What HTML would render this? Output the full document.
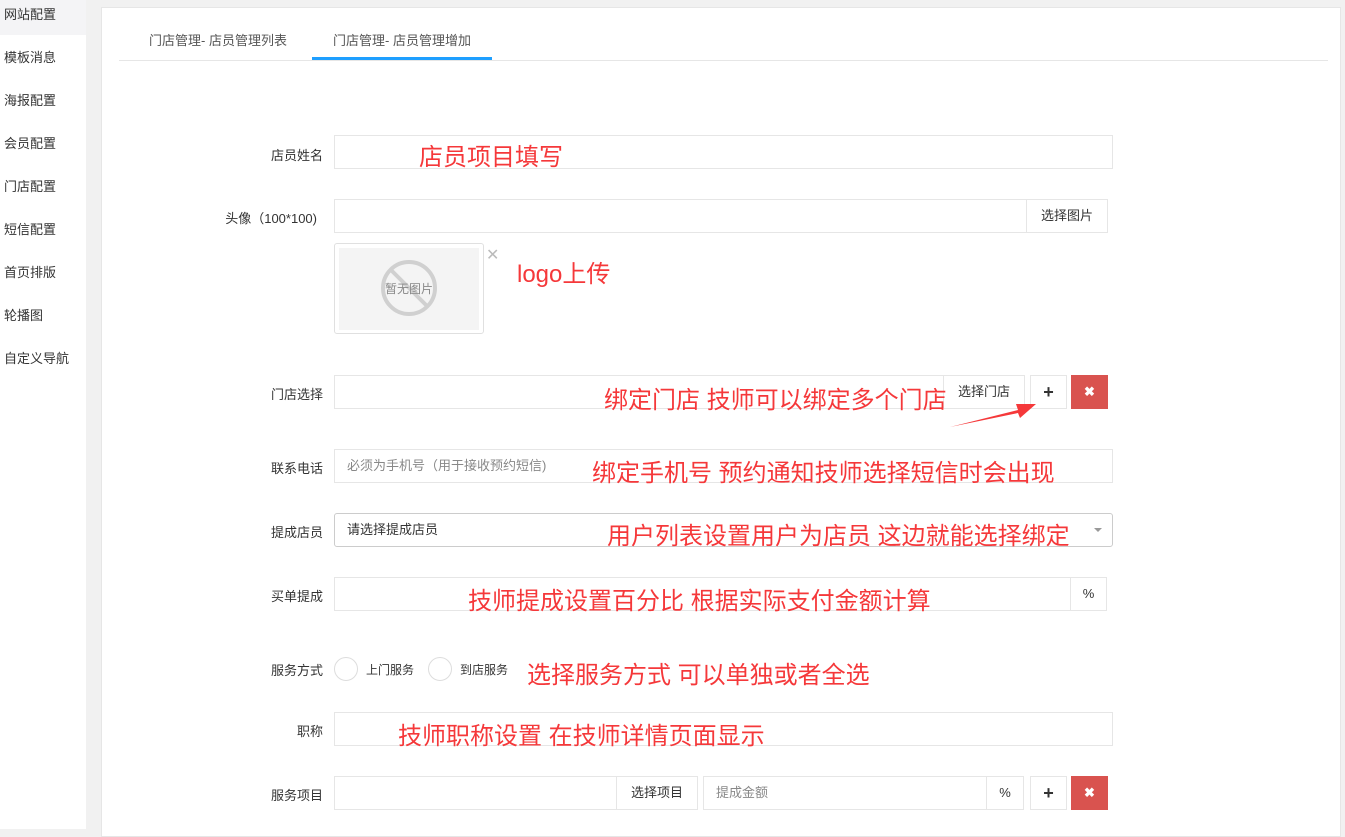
<!DOCTYPE html>
<html><head><meta charset="utf-8"><style>
*{margin:0;padding:0;box-sizing:border-box}
body{width:1345px;height:829px;overflow:hidden;background:#f1f1f1;font-family:"Liberation Sans","Noto Sans CJK SC",sans-serif;font-size:13px;color:#333;position:relative}
.side{position:absolute;left:0;top:0;width:86px;height:829px;background:#fff}
.side div{height:43px;line-height:30px;padding-left:4px;font-size:13px;color:#333}
.side div.on{background:#f4f4f6;height:35px}
.panel{position:absolute;left:101px;top:7px;width:1240px;height:830px;background:#fff;border:1px solid #e6e6e6}
.a{position:absolute}
.tab{position:absolute;top:22px;font-size:13px;color:#555}
.lbl{position:absolute;width:200px;text-align:right;font-size:13px;color:#333}
.in{position:absolute;height:34px;border:1px solid #e6e6e6;background:#fff;font-size:13px;color:#888;padding-left:12px;line-height:32px}
.btn{position:absolute;height:34px;border:1px solid #e6e6e6;background:#fff;font-size:13px;color:#333;text-align:center;line-height:32px}
.red{position:absolute;color:#f5383a;font-size:24px;white-space:nowrap;margin-top:-3px}
.x{background:#d9534f;border-color:#d9534f;color:#fff;font-weight:bold}
.radio{position:absolute;width:24px;height:24px;border:1px solid #ddd;border-radius:50%;background:#fff}
</style></head><body>
<div class="side">
<div class="on">网站配置</div><div style="height:8px"></div>
<div>模板消息</div><div>海报配置</div><div>会员配置</div><div>门店配置</div><div>短信配置</div><div>首页排版</div><div>轮播图</div><div>自定义导航</div>
</div>
<div class="panel"></div>
<div class="tab" style="left:149px;top:30px">门店管理- 店员管理列表</div>
<div class="tab" style="left:333px;top:30px">门店管理- 店员管理增加</div>
<div class="a" style="left:119px;top:60px;width:1209px;height:1px;background:#e6e6e6"></div>
<div class="a" style="left:312px;top:57px;width:180px;height:3px;background:#1e9fff"></div>

<div class="lbl" style="left:123px;top:145px">店员姓名</div>
<div class="in" style="left:334px;top:135px;width:779px"></div>
<div class="red" style="left:419px;top:140px">店员项目填写</div>

<div class="lbl" style="left:117px;top:208px">头像（100*100)</div>
<div class="in" style="left:334px;top:199px;width:693px"></div>
<div class="btn" style="left:1026px;top:199px;width:82px">选择图片</div>
<div class="a" style="left:334px;top:243px;width:150px;height:91px;border:1px solid #e0e0e0;border-radius:3px;background:#fff"></div>
<div class="a" style="left:339px;top:248px;width:140px;height:82px;background:#f4f4f4"></div>
<svg class="a" style="left:380px;top:259px" width="58" height="58"><circle cx="29" cy="29" r="26" fill="none" stroke="#d0d0d0" stroke-width="4"/><line x1="11" y1="11" x2="47" y2="47" stroke="#d0d0d0" stroke-width="4"/><text x="29" y="34" font-size="12" text-anchor="middle" fill="#888" font-family="Noto Sans CJK SC">暂无图片</text></svg>
<div class="a" style="left:486px;top:245px;color:#bbb;font-size:16px">✕</div>
<div class="red" style="left:517px;top:257px">logo上传</div>

<div class="lbl" style="left:123px;top:384px">门店选择</div>
<div class="in" style="left:334px;top:375px;width:610px"></div>
<div class="btn" style="left:943px;top:375px;width:82px">选择门店</div>
<div class="btn" style="left:1030px;top:375px;width:37px;font-weight:bold;font-size:18px">+</div>
<div class="btn x" style="left:1071px;top:375px;width:37px">✖</div>
<div class="red" style="left:604px;top:383px">绑定门店 技师可以绑定多个门店</div>
<svg class="a" style="left:948px;top:400px" width="90" height="30"><polygon points="2,27 70,10 68,4 88,4 72,18 70,13" fill="#f5383a"/></svg>

<div class="lbl" style="left:123px;top:458px">联系电话</div>
<div class="in" style="left:334px;top:449px;width:779px">必须为手机号（用于接收预约短信)</div>
<div class="red" style="left:592px;top:456px">绑定手机号 预约通知技师选择短信时会出现</div>

<div class="lbl" style="left:123px;top:522px">提成店员</div>
<div class="in" style="left:334px;top:513px;width:779px;color:#333;border-color:#ccc;border-radius:3px">请选择提成店员</div>
<div class="a" style="left:1094px;top:528px;width:0;height:0;border:4px solid transparent;border-top-color:#999"></div>
<div class="red" style="left:607px;top:519px">用户列表设置用户为店员 这边就能选择绑定</div>

<div class="lbl" style="left:123px;top:586px">买单提成</div>
<div class="in" style="left:334px;top:577px;width:737px"></div>
<div class="btn" style="left:1070px;top:577px;width:37px">%</div>
<div class="red" style="left:468px;top:584px">技师提成设置百分比 根据实际支付金额计算</div>

<div class="lbl" style="left:123px;top:660px">服务方式</div>
<div class="radio" style="left:334px;top:657px"></div>
<div class="a" style="left:366px;top:661px;font-size:12px">上门服务</div>
<div class="radio" style="left:428px;top:657px"></div>
<div class="a" style="left:460px;top:661px;font-size:12px">到店服务</div>
<div class="red" style="left:527px;top:658px">选择服务方式 可以单独或者全选</div>

<div class="lbl" style="left:123px;top:721px">职称</div>
<div class="in" style="left:334px;top:712px;width:779px"></div>
<div class="red" style="left:398px;top:719px">技师职称设置 在技师详情页面显示</div>

<div class="lbl" style="left:123px;top:785px">服务项目</div>
<div class="in" style="left:334px;top:776px;width:283px"></div>
<div class="btn" style="left:616px;top:776px;width:82px">选择项目</div>
<div class="in" style="left:703px;top:776px;width:284px">提成金额</div>
<div class="btn" style="left:986px;top:776px;width:38px">%</div>
<div class="btn" style="left:1030px;top:776px;width:37px;font-weight:bold;font-size:18px">+</div>
<div class="btn x" style="left:1071px;top:776px;width:37px">✖</div>
</body></html>
